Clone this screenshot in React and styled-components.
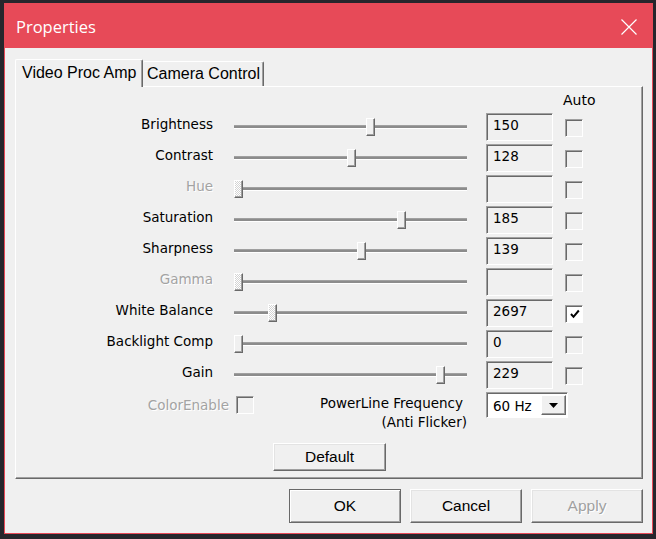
import React from 'react';
import styled, { createGlobalStyle, css } from 'styled-components';

const GlobalStyle = createGlobalStyle`
  html, body {
    margin: 0;
    padding: 0;
    background: #26262c;
  }
  body {
    width: 656px;
    height: 539px;
    overflow: hidden;
  }
`;

const controls = [
  { label: 'Brightness', value: '150', pos: 0.589 },
  { label: 'Contrast', value: '128', pos: 0.504 },
  { label: 'Hue', value: '', pos: 0, disabled: true },
  { label: 'Saturation', value: '185', pos: 0.728 },
  { label: 'Sharpness', value: '139', pos: 0.549 },
  { label: 'Gamma', value: '', pos: 0, disabled: true },
  { label: 'White Balance', value: '2697', pos: 0.152, locked: true, auto: true },
  { label: 'Backlight Comp', value: '0', pos: 0 },
  { label: 'Gain', value: '229', pos: 0.902 },
];

const TRACK_W = 233;
const THUMB_W = 9;

export default function App() {
  return (
    <>
      <GlobalStyle />
      <Window>
        <TitleBar>
          <Title>Properties</Title>
          <CloseIcon width="16" height="16" viewBox="0 0 16 16">
            <path d="M0.5 0.5 L15.5 15.5 M15.5 0.5 L0.5 15.5" stroke="#fff" strokeWidth="1.2" />
          </CloseIcon>
        </TitleBar>
        <Body>
          <TabRow>
            <Tab $active $w={128}>Video Proc Amp</Tab>
            <Tab $w={121}>Camera Control</Tab>
          </TabRow>
          <Panel>
            <Grid>
              <AutoHeader>Auto</AutoHeader>
              {controls.map((c) => (
                <React.Fragment key={c.label}>
                  <Label $disabled={c.disabled}>{c.label}</Label>
                  <Slider>
                    <Track />
                    <Thumb
                      $hatched={c.disabled || c.locked}
                      style={{ left: Math.round(c.pos * (TRACK_W - THUMB_W)) }}
                    />
                  </Slider>
                  <ValueBox>{c.value}</ValueBox>
                  <CheckBox $checked={c.auto}>
                    {c.auto && (
                      <svg width="10" height="10" viewBox="0 0 10 10">
                        <path d="M1 5 L3.5 7.8 L8.8 1.5" stroke="#000" strokeWidth="2" fill="none" />
                      </svg>
                    )}
                  </CheckBox>
                </React.Fragment>
              ))}
            </Grid>
            <ExtraRow>
              <ExtraLeft>
                <ColorGroup>
                  <Label $disabled $inline>ColorEnable</Label>
                  <CheckBox $small />
                </ColorGroup>
                <PowerText>
                  <PowerLine>PowerLine Frequency</PowerLine>
                  <span>(Anti Flicker)</span>
                </PowerText>
              </ExtraLeft>
              <Select>
                <SelectValue>60 Hz</SelectValue>
                <SelectButton>
                  <svg width="9" height="5" viewBox="0 0 9 5">
                    <path d="M0 0 H9 L4.5 5 Z" fill="#000" />
                  </svg>
                </SelectButton>
              </Select>
            </ExtraRow>
            <DefaultRow>
              <Button $w={113}>Default</Button>
            </DefaultRow>
          </Panel>
          <Footer>
            <Button $primary>OK</Button>
            <Button>Cancel</Button>
            <Button $disabled>Apply</Button>
          </Footer>
        </Body>
      </Window>
    </>
  );
}

const Window = styled.div`
  margin: 3px 0 0 4px;
  width: 649px;
  height: 531px;
  box-sizing: border-box;
  border: 1px solid #e74a58;
  background: #f0f0f0;
  display: flex;
  flex-direction: column;
`;

const TitleBar = styled.div`
  height: 44px;
  flex: none;
  background: #e74a58;
  display: flex;
  align-items: center;
  justify-content: space-between;
  padding: 0 15px 0 11px;
`;

const Title = styled.span`
  font-family: 'Open Sans', sans-serif;
  font-size: 16.5px;
  color: #fff;
  margin-top: 1px;
`;

const CloseIcon = styled.svg`
  display: block;
  margin-top: 1px;
`;

const Body = styled.div`
  flex: 1;
  display: flex;
  flex-direction: column;
  padding: 11px 9px 10px 10px;
`;

const TabRow = styled.div`
  display: flex;
  align-items: flex-end;
  height: 28px;
  position: relative;
  z-index: 1;
`;

const Tab = styled.div`
  box-sizing: border-box;
  width: ${(p) => p.$w}px;
  font-family: 'Liberation Sans', Arial, sans-serif;
  font-size: 16px;
  white-space: nowrap;
  color: #000;
  background: #f0f0f0;
  border-top: 1px solid #fff;
  border-left: 1px solid #fff;
  border-right: 1px solid #696969;
  box-shadow: inset -1px 0 0 #a0a0a0;
  border-radius: 2px 2px 0 0;
  display: flex;
  align-items: center;
  ${(p) =>
    p.$active
      ? css`
          height: 28px;
          padding: 0 0 2px 6px;
        `
      : css`
          height: 25px;
          margin-bottom: 1px;
          padding: 0 0 0 4px;
          border-left: none;
        `}
`;

const Panel = styled.div`
  margin-top: -1px;
  height: 393px;
  box-sizing: border-box;
  border: 1px solid;
  border-color: #fff #696969 #696969 #fff;
  box-shadow: inset -1px -1px 0 #a0a0a0;
  display: flex;
  flex-direction: column;
`;

const Grid = styled.div`
  display: grid;
  grid-template-columns: 197px 254px 86px 70px;
  grid-template-rows: 25px;
  grid-auto-rows: 31px;
  & > * {
    min-width: 0;
  }
`;

const AutoHeader = styled.div`
  grid-column: 4;
  align-self: center;
  font-family: 'DejaVu Sans', Tahoma, sans-serif;
  font-size: 14px;
  color: #000;
  padding-left: 10px;
  white-space: nowrap;
`;

const Label = styled.div`
  font-family: 'DejaVu Sans', Tahoma, sans-serif;
  font-size: 13.5px;
  line-height: 19px;
  white-space: nowrap;
  color: ${(p) => (p.$disabled ? '#a3a3a3' : '#000')};
  text-shadow: ${(p) => (p.$disabled ? '1px 1px 0 #fff' : 'none')};
  ${(p) =>
    !p.$inline &&
    css`
      grid-column: 1;
      justify-self: end;
      align-self: center;
      margin-bottom: 7px;
    `}
`;

const Slider = styled.div`
  position: relative;
  width: 233px;
  display: flex;
  align-items: center;
  margin-left: 21px;
`;

const Track = styled.div`
  width: 100%;
  height: 2px;
  background: #8c8c8c;
  border-top: 1px solid #a0a0a0;
  border-bottom: 1px solid #fff;
  margin-bottom: 2px;
`;

const Thumb = styled.div`
  position: absolute;
  top: 6px;
  width: 9px;
  height: 18px;
  box-sizing: border-box;
  border: 1px solid;
  border-color: #fff #696969 #696969 #fff;
  box-shadow: inset -1px -1px 0 #a0a0a0;
  background: ${(p) =>
    p.$hatched
      ? 'repeating-conic-gradient(#ffffff 0 25%, #d4d4d4 0 50%) 0 0 / 2px 2px'
      : '#f0f0f0'};
`;

const ValueBox = styled.div`
  margin-left: 19px;
  width: 67px;
  height: 28px;
  margin-top: 1px;
  box-sizing: border-box;
  border: 1px solid;
  border-color: #a0a0a0 #fff #fff #a0a0a0;
  box-shadow: inset 1px 1px 0 #696969;
  font-family: 'DejaVu Sans', Tahoma, sans-serif;
  font-size: 13.5px;
  color: #000;
  padding: 3px 0 0 6px;
`;

const CheckBox = styled.div`
  width: 18px;
  height: 18px;
  box-sizing: border-box;
  align-self: center;
  margin-left: ${(p) => (p.$small ? '0' : '12px')};
  margin-top: ${(p) => (p.$small ? '4px' : '0')};
  border: 1px solid;
  border-color: #a0a0a0 #fff #fff #a0a0a0;
  box-shadow: inset 1px 1px 0 #696969;
  background: ${(p) => (p.$checked ? '#fff' : '#f0f0f0')};
  display: flex;
  align-items: center;
  justify-content: center;
  padding: 1px 0 0 1px;
`;

const ExtraRow = styled.div`
  display: flex;
  height: 43px;
  align-items: flex-start;
`;

const ExtraLeft = styled.div`
  width: 451px;
  display: flex;
  align-items: flex-start;
`;

const ColorGroup = styled.div`
  width: 238px;
  display: flex;
  justify-content: flex-end;
  align-items: flex-start;
  gap: 7px;
  padding-top: 4px;
  & > :first-child {
    margin-top: 1px;
  }
  & > :last-child {
    margin-top: 0;
  }
`;

const PowerText = styled.div`
  margin-left: auto;
  display: flex;
  flex-direction: column;
  align-items: flex-end;
  padding-top: 3px;
  font-family: 'DejaVu Sans', Tahoma, sans-serif;
  font-size: 13.5px;
  line-height: 19px;
  color: #000;
  white-space: nowrap;
`;

const PowerLine = styled.span`
  margin-right: 4px;
`;

const Select = styled.div`
  margin: 1px 0 0 19px;
  width: 82px;
  height: 26px;
  box-sizing: border-box;
  border: 1px solid;
  border-color: #a0a0a0 #fff #fff #a0a0a0;
  box-shadow: inset 1px 1px 0 #696969;
  background: #fff;
  display: flex;
  align-items: center;
  padding: 2px 1px 1px 6px;
`;

const SelectValue = styled.span`
  flex: 1;
  font-family: 'DejaVu Sans', Tahoma, sans-serif;
  font-size: 13.5px;
  color: #000;
`;

const SelectButton = styled.div`
  width: 25px;
  height: 20px;
  box-sizing: border-box;
  background: #f0f0f0;
  border: 1px solid;
  border-color: #fff #696969 #696969 #fff;
  box-shadow: inset -1px -1px 0 #a0a0a0;
  display: flex;
  align-items: center;
  justify-content: center;
  margin-top: -1px;
`;

const DefaultRow = styled.div`
  display: flex;
  justify-content: center;
  margin-top: 9px;
  padding-left: 1px;
`;

const Button = styled.div`
  width: ${(p) => p.$w || 112}px;
  height: ${(p) => (p.$w ? 28 : 34)}px;
  box-sizing: border-box;
  border: 1px solid;
  border-color: ${(p) => (p.$primary ? '#696969' : '#fff #696969 #696969 #fff')};
  box-shadow: ${(p) =>
    p.$primary
      ? 'inset 1px 1px 0 #fff, inset -1px -1px 0 #a0a0a0'
      : 'inset -1px -1px 0 #a0a0a0, inset 1px 1px 0 #e3e3e3'};
  background: #f0f0f0;
  display: flex;
  align-items: center;
  justify-content: center;
  font-family: 'Liberation Sans', Arial, sans-serif;
  font-size: 15.5px;
  color: ${(p) => (p.$disabled ? '#a0a0a0' : '#000')};
  text-shadow: ${(p) => (p.$disabled ? '1px 1px 0 #fff' : 'none')};
`;

const Footer = styled.div`
  display: flex;
  justify-content: flex-end;
  gap: 9px;
  margin-top: 10px;
`;
